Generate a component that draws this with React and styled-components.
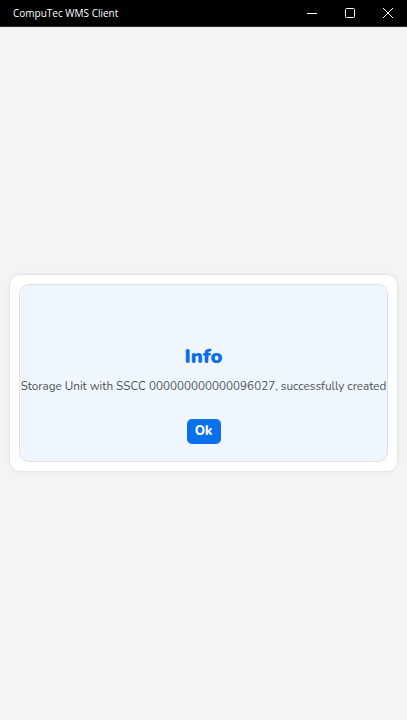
import React from 'react';
import styled, { createGlobalStyle } from 'styled-components';

const GlobalStyle = createGlobalStyle`
  html, body {
    margin: 0;
    padding: 0;
    height: 100%;
  }
  body {
    background: #f3f4f4;
    font-family: "Nunito", "Lato", "Noto Sans", sans-serif;
  }
  #root {
    height: 100%;
  }
`;

const Window = styled.div`
  display: flex;
  flex-direction: column;
  width: 407px;
  height: 720px;
  background: #f3f4f4;
`;

const TitleBar = styled.div`
  display: flex;
  align-items: center;
  height: 26px;
  background: #000;
  color: #fff;
  flex-shrink: 0;
  border-bottom: 1px solid #2a2a2a;
`;

const Title = styled.div`
  flex: 1;
  padding-left: 13px;
  font-family: "Segoe UI", "Open Sans", "Noto Sans", sans-serif;
  font-size: 10px;
  color: #fff;
`;

const WinButton = styled.div`
  width: 38px;
  height: 26px;
  display: flex;
  align-items: center;
  justify-content: center;
`;

const Content = styled.div`
  flex: 1;
  display: flex;
  align-items: center;
  justify-content: center;
  padding: 0 9px;
  padding-bottom: 2px;
`;

const Outer = styled.div`
  width: 100%;
  box-sizing: border-box;
  background: #fff;
  border: 1px solid #e4e6e6;
  border-radius: 11px;
  padding: 9px;
  box-shadow: 0 0 6px rgba(0, 0, 0, 0.04);
`;

const Inner = styled.div`
  height: 178px;
  box-sizing: border-box;
  background: #eff6fe;
  border: 1px solid #dfe3e8;
  border-radius: 10px;
  display: flex;
  flex-direction: column;
  align-items: center;
  padding-top: 59px;
`;

const Heading = styled.h2`
  margin: 0;
  font-size: 20px;
  font-weight: 900;
  color: #0b6fe9;
  line-height: 26px;
`;

const Message = styled.p`
  margin: 7px 0 0;
  font-size: 11.7px;
  color: #4e5459;
  white-space: nowrap;
  line-height: 18px;
`;

const OkButton = styled.button`
  margin-top: 24px;
  width: 34px;
  height: 25px;
  border: none;
  border-radius: 5px;
  background: #0a70ec;
  color: #fff;
  font-family: inherit;
  font-weight: 800;
  font-size: 13px;
  padding: 0;
`;

export default function App() {
  return (
    <>
      <GlobalStyle />
      <Window>
        <TitleBar>
          <Title>CompuTec WMS Client</Title>
          <WinButton>
            <svg width="12" height="12" viewBox="0 0 12 12">
              <path d="M1 6.5h10" stroke="#fff" strokeWidth="1" />
            </svg>
          </WinButton>
          <WinButton>
            <svg width="12" height="12" viewBox="0 0 12 12">
              <rect x="1.5" y="1.5" width="9" height="9" rx="1" fill="none" stroke="#fff" strokeWidth="1" />
            </svg>
          </WinButton>
          <WinButton>
            <svg width="12" height="12" viewBox="0 0 12 12">
              <path d="M1 1l10 10M11 1L1 11" stroke="#fff" strokeWidth="1" />
            </svg>
          </WinButton>
        </TitleBar>
        <Content>
          <Outer>
            <Inner>
              <Heading>Info</Heading>
              <Message>Storage Unit with SSCC 000000000000096027, successfully created</Message>
              <OkButton>Ok</OkButton>
            </Inner>
          </Outer>
        </Content>
      </Window>
    </>
  );
}
